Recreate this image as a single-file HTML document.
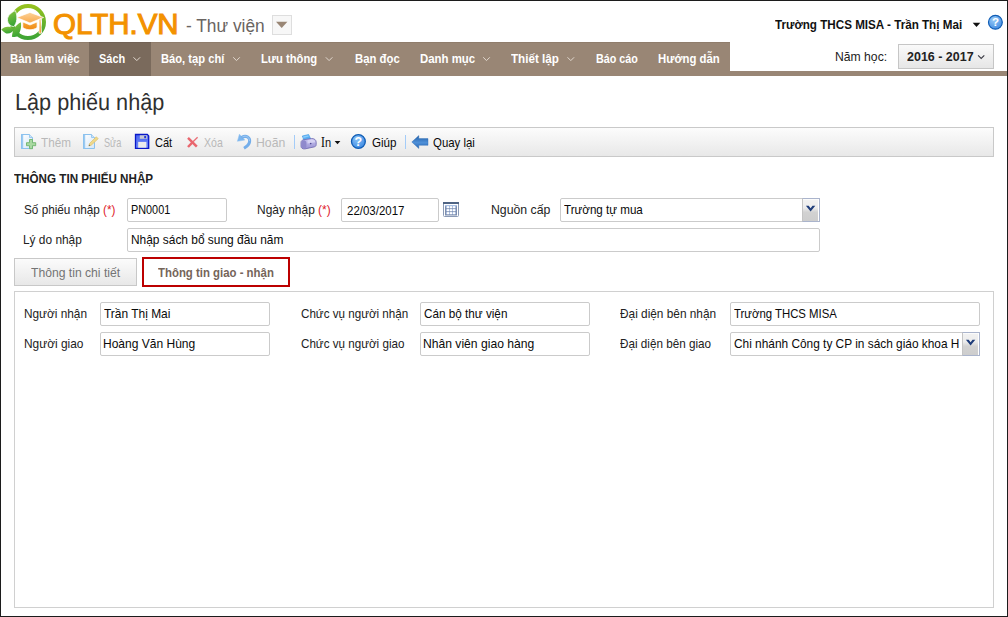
<!DOCTYPE html>
<html lang="vi">
<head>
<meta charset="utf-8">
<title>Lập phiếu nhập</title>
<style>
html,body{margin:0;padding:0;}
body{width:1008px;height:617px;position:relative;overflow:hidden;background:#fff;font-family:"Liberation Sans",sans-serif;font-size:13px;color:#222;}
.frame{position:absolute;left:0;top:0;width:1006px;height:615px;border:1px solid #1c1c1c;z-index:50;pointer-events:none;}
.t{position:absolute;white-space:nowrap;line-height:1;transform-origin:0 0;}
.abs{position:absolute;}
.req{color:#e0202a;}
.si{font-family:"Liberation Serif",serif;font-size:13.7px;color:#000;}
#brand{-webkit-text-stroke:1.1px #f39200;}
.subbtn{left:272px;top:15px;width:20px;height:20px;border:1px solid #dedede;background:#f7f7f7;box-sizing:border-box;}
.nav{left:1px;top:42px;width:729px;height:34px;background:#998675;box-shadow:inset 0 1px 0 #907d6c;}
.navline{left:1px;top:71px;width:1006px;height:5px;background:#998675;}
.navact{left:89px;top:42px;width:62px;height:34px;background:#7a6a5c;box-shadow:inset 0 1px 0 #726256;}
.ybox{left:898px;top:44px;width:96px;height:25px;box-sizing:border-box;border:1px solid #c6c6c6;background:linear-gradient(#fafafa,#e6e6e6);}
.tb{left:14px;top:127px;width:980px;height:30px;box-sizing:border-box;border:1px solid #c9c9c9;background:linear-gradient(#fcfcfc,#e8e8e8);}
.sep{position:absolute;top:135px;width:1px;height:14px;background:#a4ccf8;}
.inp{position:absolute;box-sizing:border-box;border:1px solid #cbcbcb;border-radius:2px;background:#fff;height:24px;}
.tab1{left:14px;top:258px;width:123px;height:28px;box-sizing:border-box;border:1px solid #c8c8c8;background:linear-gradient(#fbfbfb,#e8e8e8);}
.tab2{left:142px;top:257px;width:148px;height:30px;box-sizing:border-box;border:2px solid #bc0000;background:#fff;}
.panel{left:14px;top:291px;width:980px;height:317px;box-sizing:border-box;border:1px solid #d0d0d0;background:#fff;}
.selbtn{position:absolute;box-sizing:border-box;width:18px;height:24px;border:1px solid #aab4cc;border-left-color:#c4c4c4;background:linear-gradient(#f2f2f2,#ececec 40%,#d2d2d2 60%,#cdcdcd);box-shadow:inset -1px 0 0 #fff, inset 0 1px 0 #fbfbfb;}
</style>
</head>
<body>
<div class="frame"></div>

<svg class="abs" style="left:0;top:0" width="56" height="44" viewBox="0 0 56 44">
  <defs>
    <linearGradient id="lg" x1="0" y1="0" x2="0" y2="1"><stop offset="0" stop-color="#95c11f"/><stop offset="1" stop-color="#3fa535"/></linearGradient>
    <linearGradient id="lf" x1="0" y1="0" x2="0.300" y2="1"><stop offset="0" stop-color="#8dc63f"/><stop offset="1" stop-color="#3aa535"/></linearGradient>
    <linearGradient id="lo" x1="0" y1="0" x2="0" y2="1"><stop offset="0" stop-color="#fcd29a"/><stop offset="1" stop-color="#f9a94a"/></linearGradient>
    <linearGradient id="lo2" x1="0" y1="0" x2="0" y2="1"><stop offset="0" stop-color="#f6a53a"/><stop offset="1" stop-color="#f08a12"/></linearGradient>
  </defs>
  <circle cx="28" cy="22" r="16" fill="none" stroke="url(#lg)" stroke-width="4"/>
  <path d="M15.300 10.600 C11.500 12.500 7 15.500 7.500 20.500 C7.800 24 10.500 26.300 13.600 26.600 C17.200 23.500 18 16 15.300 10.600Z" fill="url(#lf)" stroke="#fff" stroke-width="0.800"/>
  <path d="M1.300 29.600 C4 26.800 8.500 25.200 14.200 28.800 C13 32 9.500 34.200 6.200 33.400 C4 32.800 2.500 30.800 1.300 29.600Z" fill="url(#lf)"/>
  <path d="M11.900 36.700 C12.300 31 15 25.200 20.800 22.300 C21.800 27 20.300 32.500 17 36.600 C15.500 37.200 13.500 37.200 11.900 36.700Z" fill="url(#lf)"/>
  <path d="M16.800 17.500 L30 12.400 L43.600 17.500 L30 23Z" fill="url(#lo)" stroke="#fff" stroke-width="0.700"/>
  <path d="M22.800 22 L30 25 L37.100 22 L37.100 27.500 C33 30.500 27 30.500 22.800 27.500Z" fill="url(#lo2)" stroke="#fff" stroke-width="0.700"/>
  <path d="M39.200 19.500 L40.800 18.800 L41.500 33.200 L39 33.200Z" fill="#f39a2a" stroke="#fff" stroke-width="0.800"/>
</svg>
<div class="abs subbtn"></div>
<svg class="abs" style="left:275px;top:21px" width="14" height="8" viewBox="0 0 14 8"><path d="M1 0.800 L12.400 0.800 L6.700 7Z" fill="#998675"/></svg>
<svg class="abs" style="left:972px;top:22px" width="10" height="6" viewBox="0 0 10 6"><path d="M0.700 0.800 L8.300 0.800 L4.500 4.900Z" fill="#111"/></svg>
<svg class="abs" style="left:987px;top:14px" width="17" height="17" viewBox="0 0 17 17">
  <defs><radialGradient id="hg" cx="0.400" cy="0.300" r="0.800"><stop offset="0" stop-color="#9accf8"/><stop offset="1" stop-color="#3a86e0"/></radialGradient></defs>
  <circle cx="8.400" cy="8.300" r="6.900" fill="url(#hg)" stroke="#0f5cb4" stroke-width="1.200"/>
  <text x="8.400" y="12.400" text-anchor="middle" font-family="Liberation Sans, sans-serif" font-size="11.500" font-weight="bold" fill="#fff">?</text>
</svg>

<div class="abs nav"></div>
<div class="abs navline"></div>
<div class="abs navact"></div>
<svg class="abs" style="left:0;top:42px" width="1008" height="34" viewBox="0 42 1008 34" fill="none" stroke="#e2d9d0" stroke-width="1">
  <path d="M133.500 57.300 L136.800 60.600 L140.100 57.300"/>
  <path d="M233.200 57.300 L236.500 60.600 L239.800 57.300"/>
  <path d="M325.800 57.300 L329.100 60.600 L332.400 57.300"/>
  <path d="M483.200 57.300 L486.500 60.600 L489.800 57.300"/>
  <path d="M567.500 57.300 L570.800 60.600 L574.100 57.300"/>
</svg>
<div class="abs ybox"></div>
<svg class="abs" style="left:0;top:42px" width="1008" height="34" viewBox="0 42 1008 34" fill="none"><path d="M978.100 55.300 L981.200 58.500 L984.300 55.300" stroke="#3a3a44" stroke-width="1.100"/></svg>

<div class="abs tb"></div>
<svg class="abs" style="left:0;top:126px" width="1008" height="32" viewBox="0 126 1008 32">
  <defs>
    <linearGradient id="gdoc" x1="0" y1="0" x2="1" y2="1"><stop offset="0" stop-color="#ffffff"/><stop offset="1" stop-color="#d4e6f8"/></linearGradient>
    <linearGradient id="gsave" x1="0" y1="0" x2="0" y2="1"><stop offset="0" stop-color="#4a66f2"/><stop offset="1" stop-color="#6f8af8"/></linearGradient>
    <linearGradient id="garr" x1="0" y1="0" x2="0" y2="1"><stop offset="0" stop-color="#215fa8"/><stop offset="0.550" stop-color="#4f90d8"/><stop offset="1" stop-color="#2566b2"/></linearGradient>
    <radialGradient id="ghelp" cx="0.400" cy="0.300" r="0.800"><stop offset="0" stop-color="#8cc4f8"/><stop offset="1" stop-color="#3684e0"/></radialGradient>
    <linearGradient id="gprn" x1="0" y1="0" x2="0" y2="1"><stop offset="0" stop-color="#c6c2ee"/><stop offset="1" stop-color="#9a94d4"/></linearGradient>
  </defs>
  <!-- Them -->
  <path d="M21.500 134.500 L29.500 134.500 L32.500 137.500 L32.500 148.500 L21.500 148.500Z" fill="url(#gdoc)" stroke="#8cc2ee" stroke-width="1"/>
  <path d="M29.500 134.500 L29.500 137.500 L32.500 137.500" fill="#cfe4f8" stroke="#8cc2ee" stroke-width="0.800"/>
  <path d="M29.500 139.500 L32.500 139.500 L32.500 142.700 L35.700 142.700 L35.700 145.700 L32.500 145.700 L32.500 148.700 L29.500 148.700 L29.500 145.700 L26.500 145.700 L26.500 142.700 L29.500 142.700Z" fill="#a9d9a1" stroke="#6fb46c" stroke-width="0.900"/>
  <rect x="21" y="134" width="2.200" height="15" fill="#8cc2ee" opacity="0.850"/>
  <!-- Sua -->
  <path d="M83.500 134.500 L91.500 134.500 L94.500 137.500 L94.500 148.500 L83.500 148.500Z" fill="url(#gdoc)" stroke="#8cc2ee" stroke-width="1"/>
  <path d="M91.500 134.500 L91.500 137.500 L94.500 137.500" fill="#cfe4f8" stroke="#8cc2ee" stroke-width="0.800"/>
  <rect x="83" y="134" width="2.200" height="15" fill="#8cc2ee" opacity="0.850"/>
  <path d="M96.300 136.800 L98.200 138.700 L91.200 145.200 L88.800 146 L89.600 143.400Z" fill="#efd98c" stroke="#dcc06a" stroke-width="0.700"/>
  <path d="M88.800 146 L89.300 144.600 L90.200 145.500Z" fill="#555"/>
  <!-- Cat (save) -->
  <path d="M135.500 134.500 L147.300 134.500 L148.700 135.900 L148.700 148.400 L135.500 148.400Z" fill="url(#gsave)" stroke="#0a18c8" stroke-width="1.300"/>
  <rect x="139.800" y="135.300" width="7.400" height="3.500" fill="#c9c9cf"/>
  <rect x="144.200" y="136" width="1.900" height="2.200" fill="#2438d8"/>
  <rect x="138.200" y="141.900" width="8.200" height="5.800" fill="#ececec"/>
  <!-- Xoa -->
  <path d="M188 137.800 L196.800 146.600" stroke="#e9666e" stroke-width="2.500" fill="none"/>
  <path d="M197.600 137.200 L192.500 142.200" stroke="#ea6e76" stroke-width="1.300" fill="none"/>
  <path d="M192.800 142 L188 147" stroke="#e9666e" stroke-width="2.500" fill="none"/>
  <!-- Hoan -->
  <path d="M239.400 134.200 L237.400 141.300 L244.800 140.100 Z" fill="#7db6ee" stroke="#8ec0f0" stroke-width="0.500" stroke-linejoin="round"/>
  <path d="M241.500 137.600 C246.500 134.600 250.200 137.800 249.600 141.800 C249.200 144.800 246.800 146.600 244 148.200" fill="none" stroke="#74aeea" stroke-width="3"/>
  <path d="M242.500 136.800 C246.500 135 249.800 137.600 249.400 141" fill="none" stroke="#a6cdf4" stroke-width="0.900"/>
  <!-- In (printer) -->
  <path d="M302.300 136 L308.600 134.500 L310.800 139 L304 140.600Z" fill="#56aef4" stroke="#3b98e6" stroke-width="0.600"/>
  <path d="M303 136.600 L308.300 135.300 L308.900 136.500 L303.500 137.900Z" fill="#8ccbfa"/>
  <path d="M301 142.600 C301 140.800 302.300 139.900 304 139.700 L311.500 138.500 C314.200 138.300 316.200 140 316.200 142.200 L316.200 144.600 C316.200 145.900 315.400 146.700 314.200 146.900 L305 148.900 C302.600 149.200 301 148 301 146.200Z" fill="url(#gprn)" stroke="#6e68b0" stroke-width="0.800"/>
  <path d="M301.400 143 C301.400 141.200 302.600 140.400 304 140.200 C305.600 140.300 306.400 141.600 306.400 143.400 L306.400 146.400 C306.400 147.600 305.800 148.300 304.800 148.500 C302.800 148.700 301.400 147.800 301.400 146.200Z" fill="#8f89cc"/>
  <path d="M307.500 140.300 L311.600 139.600 C313.600 139.500 315.200 140.600 315.300 142.200 L307.500 143.500Z" fill="#dcd9f6" opacity="0.800"/>
  <circle cx="310.700" cy="143.600" r="0.800" fill="#4f4990"/>
  <!-- Giup -->
  <circle cx="358.400" cy="141.500" r="6.900" fill="url(#ghelp)" stroke="#0f5cb4" stroke-width="1.300"/>
  <text x="358.400" y="146" text-anchor="middle" font-family="Liberation Sans, sans-serif" font-size="12.500" font-weight="bold" fill="#fff">?</text>
  <!-- Quay lai -->
  <path d="M411.800 142 L418.800 135.600 L418.800 138.600 L428 138.600 L428 145.300 L418.800 145.300 L418.800 148.500Z" fill="url(#garr)" stroke="#2a68b0" stroke-width="0.400"/>
</svg>
<svg class="abs" style="left:443px;top:202px" width="16" height="15" viewBox="0 0 16 15">
  <rect x="0.500" y="0.500" width="15" height="14" rx="1" fill="#fff" stroke="#8a9ab6" stroke-width="1"/>
  <rect x="0" y="0" width="16" height="2" fill="#4f6484"/>
  <rect x="2" y="3" width="12" height="10.500" fill="#7d8eae"/>
  <rect x="2" y="3" width="12" height="1.200" fill="#a9c0e4"/>
  <g fill="#b2c5e6"><rect x="3" y="4.200" width="10" height="2"/><rect x="3" y="7.200" width="10" height="2"/><rect x="3" y="10.200" width="10" height="2"/></g>
  <g fill="#fff">
    <rect x="4" y="4.200" width="2" height="2"/><rect x="7" y="4.200" width="2" height="2"/><rect x="10" y="4.200" width="2" height="2"/>
    <rect x="4" y="7.200" width="2" height="2"/><rect x="7" y="7.200" width="2" height="2"/><rect x="10" y="7.200" width="2" height="2"/>
    <rect x="4" y="10.200" width="2" height="2"/><rect x="7" y="10.200" width="2" height="2"/><rect x="10" y="10.200" width="2" height="2"/>
  </g>
</svg>

<div class="sep" style="left:294px"></div>
<div class="sep" style="left:405px"></div>
<svg class="abs" style="left:334px;top:140px" width="8" height="5" viewBox="0 0 8 5"><path d="M0.600 0.900 L6.400 0.900 L3.500 4.200Z" fill="#111"/></svg>

<div class="inp" style="left:127px;top:198px;width:100px"></div>
<div class="inp" style="left:341px;top:198px;width:98px"></div>
<div class="inp" style="left:560px;top:198px;width:260px"></div>
<div class="selbtn" style="left:802px;top:198px"></div>
<div class="inp" style="left:127px;top:228px;width:693px"></div>

<div class="abs tab1"></div>
<div class="abs tab2"></div>
<div class="abs panel"></div>
<div class="inp" style="left:100px;top:302px;width:170px"></div>
<div class="inp" style="left:420px;top:302px;width:170px"></div>
<div class="inp" style="left:730px;top:302px;width:250px"></div>
<div class="inp" style="left:100px;top:332px;width:170px"></div>
<div class="inp" style="left:420px;top:332px;width:170px"></div>
<div class="inp" style="left:730px;top:332px;width:250px"></div>
<div class="selbtn" style="left:962px;top:332px"></div>
<svg class="abs" style="left:0;top:190px" width="1008" height="180" viewBox="0 190 1008 180" fill="#1f3d7a">
  <path d="M805.900 205.800 L808.700 205.800 L810.600 208.200 L812.500 205.800 L815.300 205.800 L810.600 211.600Z"/>
  <path d="M965.900 339.800 L968.700 339.800 L970.600 342.200 L972.500 339.800 L975.300 339.800 L970.600 345.600Z"/>
</svg>

<div class="t" id="brand" style="left:52.58px;top:10.00px;font-size:29px;color:#f39200;transform:scaleX(1.0167);">QLTH.VN</div>
<div class="t" id="sub" style="left:186.00px;top:17.00px;font-size:18px;color:#6a6562;transform:scaleX(0.9622);">- Thư viện</div>
<div class="t" id="user" style="left:775.20px;top:18.00px;font-size:13px;color:#111;transform:scaleX(0.8960);font-weight:bold;">Trường THCS MISA - Trần Thị Mai</div>
<div class="t" id="n1" style="left:9.60px;top:52.00px;font-size:13px;color:#fff;transform:scaleX(0.8757);font-weight:bold;">Bàn làm việc</div>
<div class="t" id="n2" style="left:98.80px;top:52.00px;font-size:13px;color:#fff;transform:scaleX(0.8416);font-weight:bold;">Sách</div>
<div class="t" id="n3" style="left:161.30px;top:52.00px;font-size:13px;color:#fff;transform:scaleX(0.8601);font-weight:bold;">Báo, tạp chí</div>
<div class="t" id="n4" style="left:261.30px;top:52.00px;font-size:13px;color:#fff;transform:scaleX(0.8638);font-weight:bold;">Lưu thông</div>
<div class="t" id="n5" style="left:354.50px;top:52.00px;font-size:13px;color:#fff;transform:scaleX(0.8716);font-weight:bold;">Bạn đọc</div>
<div class="t" id="n6" style="left:419.50px;top:52.00px;font-size:13px;color:#fff;transform:scaleX(0.8784);font-weight:bold;">Danh mục</div>
<div class="t" id="n7" style="left:511.30px;top:52.00px;font-size:13px;color:#fff;transform:scaleX(0.8952);font-weight:bold;">Thiết lập</div>
<div class="t" id="n8" style="left:595.50px;top:52.00px;font-size:13px;color:#fff;transform:scaleX(0.8295);font-weight:bold;">Báo cáo</div>
<div class="t" id="n9" style="left:658.30px;top:52.00px;font-size:13px;color:#fff;transform:scaleX(0.8726);font-weight:bold;">Hướng dẫn</div>
<div class="t" id="yl" style="left:834.86px;top:50.00px;font-size:13px;color:#222;transform:scaleX(0.9367);">Năm học:</div>
<div class="t" id="yt" style="left:907.40px;top:50.00px;font-size:13px;color:#222;transform:scaleX(0.9601);font-weight:bold;">2016 - 2017</div>
<div class="t" id="title" style="left:14.57px;top:91.00px;font-size:23.25px;color:#303030;transform:rotate(0.03deg) scaleX(0.9312);">Lập phiếu nhập</div>
<div class="t" id="b1" style="left:41.30px;top:136.00px;font-size:13px;color:#b9b9b9;transform:scaleX(0.9012);">Thêm</div>
<div class="t" id="b2" style="left:103.80px;top:136.00px;font-size:13px;color:#b9b9b9;transform:scaleX(0.7055);">Sửa</div>
<div class="t" id="b3" style="left:154.50px;top:136.00px;font-size:13px;color:#0a0a0a;transform:scaleX(0.8488);">Cất</div>
<div class="t" id="b4" style="left:203.90px;top:136.00px;font-size:13px;color:#b9b9b9;transform:scaleX(0.8117);">Xóa</div>
<div class="t" id="b5" style="left:255.56px;top:136.00px;font-size:13px;color:#b9b9b9;transform:scaleX(0.9414);">Hoãn</div>
<div class="t" id="b6" style="left:320.55px;top:136.00px;font-size:13px;color:#111;transform:scaleX(0.8500);"><span class="si">I</span>n</div>
<div class="t" id="b7" style="left:371.70px;top:136.00px;font-size:13px;color:#0a0a0a;transform:scaleX(0.8924);">Giúp</div>
<div class="t" id="b8" style="left:432.80px;top:136.00px;font-size:13px;color:#0a0a0a;transform:scaleX(0.8786);">Quay lại</div>
<div class="t" id="sect" style="left:14.30px;top:172.00px;font-size:13px;color:#222;transform:scaleX(0.8958);font-weight:bold;">THÔNG TIN PHIẾU NHẬP</div>
<div class="t" id="l1" style="left:24.30px;top:203.00px;font-size:13px;color:#222;transform:scaleX(0.9043);">Số phiếu nhập <span class="req">(*)</span></div>
<div class="t" id="v1" style="left:130.97px;top:203.00px;font-size:13px;color:#0a0a0a;transform:scaleX(0.8350);">PN0001</div>
<div class="t" id="l2" style="left:256.58px;top:203.00px;font-size:13px;color:#222;transform:scaleX(0.9191);">Ngày nhập <span class="req">(*)</span></div>
<div class="t" id="v2" style="left:347.00px;top:204.00px;font-size:13px;color:#0a0a0a;transform:scaleX(0.8823);">22/03/2017</div>
<div class="t" id="l3" style="left:490.66px;top:203.00px;font-size:13px;color:#222;transform:scaleX(0.9440);">Nguồn cấp</div>
<div class="t" id="v3" style="left:563.90px;top:203.00px;font-size:13px;color:#0a0a0a;transform:scaleX(0.8925);">Trường tự mua</div>
<div class="t" id="l4" style="left:23.39px;top:233.00px;font-size:13px;color:#222;transform:scaleX(0.9144);">Lý do nhập</div>
<div class="t" id="v4" style="left:130.88px;top:233.00px;font-size:13px;color:#0a0a0a;transform:scaleX(0.9167);">Nhập sách bổ sung đầu năm</div>
<div class="t" id="t1" style="left:30.90px;top:266.00px;font-size:13px;color:#747474;transform:scaleX(0.9345);">Thông tin chi tiết</div>
<div class="t" id="t2" style="left:157.60px;top:266.00px;font-size:13px;color:#75655a;transform:scaleX(0.8767);font-weight:bold;">Thông tin giao - nhận</div>
<div class="t" id="p1" style="left:24.39px;top:307.00px;font-size:13px;color:#222;transform:scaleX(0.9098);">Người nhận</div>
<div class="t" id="q1" style="left:104.40px;top:307.00px;font-size:13px;color:#0a0a0a;transform:scaleX(0.9189);">Trần Thị Mai</div>
<div class="t" id="p2" style="left:300.50px;top:307.00px;font-size:13px;color:#222;transform:scaleX(0.8943);">Chức vụ người nhận</div>
<div class="t" id="q2" style="left:424.30px;top:307.00px;font-size:13px;color:#0a0a0a;transform:scaleX(0.9013);">Cán bộ thư viện</div>
<div class="t" id="p3" style="left:619.90px;top:307.00px;font-size:13px;color:#222;transform:scaleX(0.9107);">Đại diện bên nhận</div>
<div class="t" id="q3" style="left:733.60px;top:307.00px;font-size:13px;color:#0a0a0a;transform:scaleX(0.8748);">Trường THCS MISA</div>
<div class="t" id="p4" style="left:24.38px;top:337.00px;font-size:13px;color:#222;transform:scaleX(0.9153);">Người giao</div>
<div class="t" id="q4" style="left:103.48px;top:337.00px;font-size:13px;color:#0a0a0a;transform:scaleX(0.9248);">Hoàng Văn Hùng</div>
<div class="t" id="p5" style="left:300.50px;top:337.00px;font-size:13px;color:#222;transform:scaleX(0.8950);">Chức vụ người giao</div>
<div class="t" id="q5" style="left:423.37px;top:337.00px;font-size:13px;color:#0a0a0a;transform:scaleX(0.9328);">Nhân viên giao hàng</div>
<div class="t" id="p6" style="left:619.90px;top:337.00px;font-size:13px;color:#222;transform:scaleX(0.8994);">Đại diện bên giao</div>
<div class="t" id="q6" style="left:733.60px;top:337.00px;font-size:13px;color:#0a0a0a;transform:scaleX(0.9130);">Chi nhánh Công ty CP in sách giáo khoa H</div>
</body>
</html>
